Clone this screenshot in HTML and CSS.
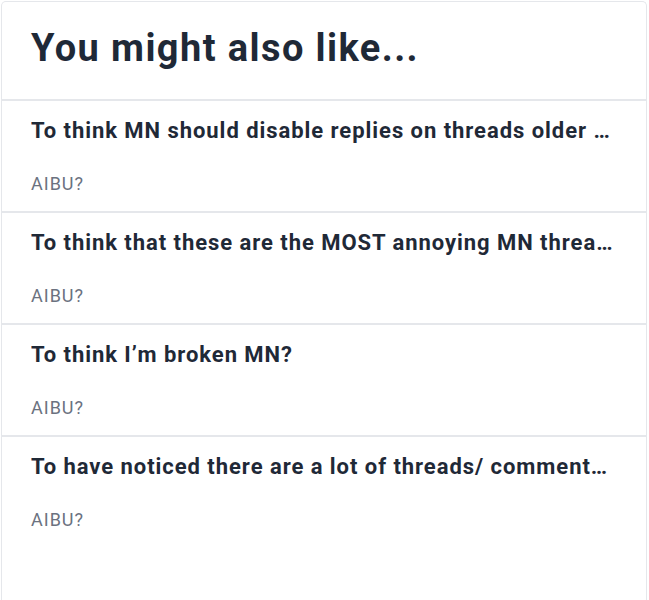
FILE: index.html
```html
<!DOCTYPE html>
<html lang="en">
<head>
<meta charset="utf-8">
<title>You might also like</title>
<link rel="stylesheet" href="styles.css">
</head>
<body>
<section class="card">
  <h2 class="card-title">You might also like...</h2>
  <ul class="thread-list">
    <li class="thread">
      <a class="thread-title" href="#">To think MN should disable replies on threads older than a certain age</a>
      <span class="thread-topic">AIBU?</span>
    </li>
    <li class="thread">
      <a class="thread-title" href="#">To think that these are the MOST annoying MN threads ever</a>
      <span class="thread-topic">AIBU?</span>
    </li>
    <li class="thread">
      <a class="thread-title" href="#">To think I’m broken MN?</a>
      <span class="thread-topic">AIBU?</span>
    </li>
    <li class="thread">
      <a class="thread-title" href="#">To have noticed there are a lot of threads/ comments about this lately</a>
      <span class="thread-topic">AIBU?</span>
    </li>
  </ul>
</section>
</body>
</html>
```

FILE: styles.css
```css
html, body {
  margin: 0;
  padding: 0;
  background: #ffffff;
}

body {
  font-family: Roboto, "Liberation Sans", Arial, sans-serif;
  color: #1f2937;
}

.card {
  margin: 1px 2px 0 1px;
  min-height: 640px;
  border: 1px solid #e5e7eb;
  border-bottom: none;
  border-radius: 5px 5px 0 0;
  background: #ffffff;
}

.card-title {
  margin: 0;
  padding: 26px 29px 31px;
  font-size: 38px;
  line-height: 40px;
  font-weight: 700;
  letter-spacing: 1.4px;
  color: #1f2937;
  border-bottom: 2px solid #e5e7eb;
}

.thread-list {
  list-style: none;
  margin: 0;
  padding: 0;
}

.thread {
  display: flex;
  flex-direction: column;
  gap: 27px;
  padding: 16px 30px 15px 29px;
  border-bottom: 2px solid #e5e7eb;
}

.thread:last-child {
  border-bottom: none;
}

.thread-title {
  display: block;
  font-size: 22px;
  line-height: 28px;
  font-weight: 700;
  letter-spacing: 0.95px;
  color: #1f2937;
  text-decoration: none;
  white-space: nowrap;
  overflow: hidden;
  text-overflow: ellipsis;
}

.thread-topic {
  font-size: 18px;
  line-height: 24px;
  letter-spacing: 1px;
  color: #6b7280;
}
```
